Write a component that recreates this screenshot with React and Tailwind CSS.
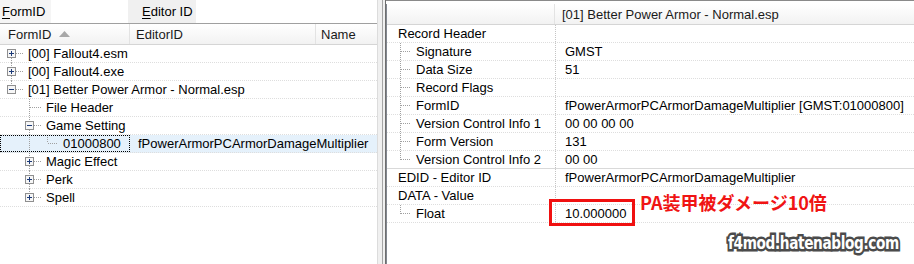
import React from 'react';

const dot = { stroke: '#a0a0a0', strokeDasharray: '1 1', shapeRendering: 'crispEdges' };

function VLine({ x, from, to }) {
  return <line x1={x + 0.5} x2={x + 0.5} y1={from} y2={to} style={dot} />;
}

function HLine({ from, to, y = 8 }) {
  return <line x1={from} x2={to} y1={y + 0.5} y2={y + 0.5} style={dot} />;
}

function Expander({ cx, cy = 8, open }) {
  return (
    <g shapeRendering="crispEdges">
      <rect x={cx - 3.5} y={cy - 3.5} width={8} height={8} fill="#f6f6f6" stroke="#8f8f8f" />
      <line x1={cx - 2} x2={cx + 3} y1={cy + 0.5} y2={cy + 0.5} stroke="#1c3a78" />
      {!open && <line x1={cx + 0.5} x2={cx + 0.5} y1={cy - 2} y2={cy + 3} stroke="#1c3a78" />}
    </g>
  );
}

// left tree rows: gutter drawing + text
const leftRows = [
  {
    text: '[00] Fallout4.esm',
    pad: 28,
    draw: (
      <>
        <VLine x={11} from={13} to={18} />
        <HLine from={16} to={23} />
        <Expander cx={11} />
      </>
    ),
  },
  {
    text: '[00] Fallout4.exe',
    pad: 28,
    draw: (
      <>
        <VLine x={11} from={0} to={4} />
        <VLine x={11} from={13} to={18} />
        <HLine from={16} to={23} />
        <Expander cx={11} />
      </>
    ),
  },
  {
    text: '[01] Better Power Armor - Normal.esp',
    pad: 28,
    draw: (
      <>
        <VLine x={11} from={0} to={4} />
        <HLine from={16} to={23} />
        <Expander cx={11} open />
      </>
    ),
  },
  {
    text: 'File Header',
    pad: 46,
    draw: (
      <>
        <VLine x={29} from={0} to={18} />
        <HLine from={30} to={41} />
      </>
    ),
  },
  {
    text: 'Game Setting',
    pad: 46,
    draw: (
      <>
        <VLine x={29} from={0} to={4} />
        <VLine x={29} from={13} to={18} />
        <HLine from={34} to={41} />
        <Expander cx={29} open />
      </>
    ),
  },
  {
    text: '01000800',
    pad: 63,
    editor: 'fPowerArmorPCArmorDamageMultiplier',
    selected: true,
    draw: (
      <>
        <VLine x={29} from={0} to={18} />
        <VLine x={47} from={0} to={8} />
        <HLine from={48} to={58} />
      </>
    ),
  },
  {
    text: 'Magic Effect',
    pad: 46,
    draw: (
      <>
        <VLine x={29} from={0} to={4} />
        <VLine x={29} from={13} to={18} />
        <HLine from={34} to={41} />
        <Expander cx={29} />
      </>
    ),
  },
  {
    text: 'Perk',
    pad: 46,
    draw: (
      <>
        <VLine x={29} from={0} to={4} />
        <VLine x={29} from={13} to={18} />
        <HLine from={34} to={41} />
        <Expander cx={29} />
      </>
    ),
  },
  {
    text: 'Spell',
    pad: 46,
    draw: (
      <>
        <VLine x={29} from={0} to={4} />
        <HLine from={34} to={41} />
        <Expander cx={29} />
      </>
    ),
  },
];

// right record view rows
const rightRows = [
  { label: 'Record Header', value: '', child: false },
  { label: 'Signature', value: 'GMST', child: true },
  { label: 'Data Size', value: '51', child: true },
  { label: 'Record Flags', value: '', child: true },
  { label: 'FormID', value: 'fPowerArmorPCArmorDamageMultiplier [GMST:01000800]', child: true },
  { label: 'Version Control Info 1', value: '00 00 00 00', child: true },
  { label: 'Form Version', value: '131', child: true },
  { label: 'Version Control Info 2', value: '00 00', child: true, last: true, solid: true },
  { label: 'EDID - Editor ID', value: 'fPowerArmorPCArmorDamageMultiplier', child: false },
  { label: 'DATA - Value', value: '', child: false },
  { label: 'Float', value: '10.000000', child: true, last: true },
];

function LeftPanel() {
  return (
    <div className="flex w-[378px] shrink-0 flex-col border-r border-[#dcdcdc]">
      <div className="flex h-[24px] shrink-0 border-b border-[#a0a0a0] leading-[23px]">
        <div className="w-[51px] bg-[#f5f5f5] pl-[2px]">
          <span className="underline underline-offset-2">F</span>ormID
        </div>
        <div className="w-[77px]" />
        <div className="w-[68px] bg-[#f0f0f0] pl-[14px]">
          <span className="underline underline-offset-2">E</span>ditor ID
        </div>
      </div>
      <div className="flex h-[21px] shrink-0 border-b border-[#d5d5d5] bg-linear-to-b from-white to-[#f2f2f2] leading-[21px] text-[#1a1a1a]">
        <div className="flex w-[130px] items-center border-r border-[#e3e3e3] pl-[8px]">
          FormID
          <svg width="11" height="6" className="ml-[8px]">
            <path d="M0 6 L5.5 0 L11 6 Z" fill="#a8a8a8" />
          </svg>
        </div>
        <div className="w-[186px] border-r border-[#e3e3e3] pl-[6px]">EditorID</div>
        <div className="pl-[5px]">Name</div>
      </div>
      <div className="flex flex-col">
        {leftRows.map((r, i) => (
          <div
            key={i}
            className={`flex h-[18px] shrink-0 border-b border-dotted border-[#dedede] leading-[18px] whitespace-nowrap ${
              r.selected ? 'bg-[#e5f1fb]' : ''
            }`}
          >
            <div
              className={`flex w-[130px] shrink-0 ${
                r.selected ? 'h-[17px] outline outline-1 -outline-offset-1 outline-dotted outline-black' : ''
              }`}
            >
              <svg width={r.pad} height="18" className="shrink-0 overflow-visible">
                {r.draw}
              </svg>
              <span>{r.text}</span>
            </div>
            {r.editor && <div className="pl-[8px]">{r.editor}</div>}
          </div>
        ))}
      </div>
    </div>
  );
}

function Splitter() {
  return (
    <div className="flex w-[8px] shrink-0 bg-[#f0f0f0]">
      <div className="w-[4px]" />
      <div className="w-px bg-[#a5a5a5]" />
      <div className="w-[2px]" />
      <div className="w-px bg-[#6e6e6e]" />
    </div>
  );
}

function RightPanel() {
  return (
    <div className="flex min-w-0 flex-1 flex-col">
      <div className="h-[4px] shrink-0 border-t border-[#8a8a8a]" />
      <div className="flex flex-1 flex-col border-l border-[#828790]">
        <div className="flex h-[21px] shrink-0 border-b border-[#d5d5d5] bg-linear-to-b from-white to-[#f2f2f2] leading-[21px] text-[#1a1a1a]">
          <div className="w-[168px] shrink-0 border-r border-[#e3e3e3]" />
          <div className="pl-[7px] whitespace-nowrap">[01] Better Power Armor - Normal.esp</div>
        </div>
        <div className="flex flex-col">
          {rightRows.map((r, i) => (
            <div
              key={i}
              className={`flex h-[18px] shrink-0 border-b leading-[18px] whitespace-nowrap ${
                r.solid ? 'border-solid border-[#d9d9d9]' : 'border-dotted border-[#dedede]'
              }`}
            >
              <div className="flex w-[168px] shrink-0">
                {r.child ? (
                  <svg width="29" height="18" className="shrink-0 overflow-visible">
                    <VLine x={13} from={0} to={r.last ? 9 : 18} />
                    <HLine from={14} to={23} />
                  </svg>
                ) : (
                  <div className="w-[11px] shrink-0" />
                )}
                <span>{r.label}</span>
              </div>
              <div className="h-[17px] border-l border-dotted border-[#c4c4c4] pl-[9px]">{r.value}</div>
            </div>
          ))}
        </div>
      </div>
    </div>
  );
}

export default function App() {
  return (
    <div className="relative flex h-[264px] w-[914px] overflow-hidden bg-white font-['Liberation_Sans',Arial,sans-serif] text-[13px] text-black">
      <LeftPanel />
      <Splitter />
      <RightPanel />

      {/* annotation overlays */}
      <div className="absolute left-[549px] top-[199px] h-[27px] w-[86px] border-[3px] border-[#f01010]" />
      <div className="absolute left-[640px] top-[191px] font-['Noto_Sans_CJK_JP',sans-serif] text-[18px] font-bold leading-[22px] text-[#f01414] whitespace-nowrap">
        PA装甲被ダメージ10倍
      </div>
      <div className="absolute left-[728px] top-[232px] origin-left scale-x-[0.76] font-['DejaVu_Sans',sans-serif] text-[18px] font-bold leading-[22px] tracking-[-0.5px] text-white whitespace-nowrap [-webkit-text-stroke:5px_#4b4b4b] [paint-order:stroke_fill]">
        f4mod.hatenablog.com
      </div>
    </div>
  );
}
